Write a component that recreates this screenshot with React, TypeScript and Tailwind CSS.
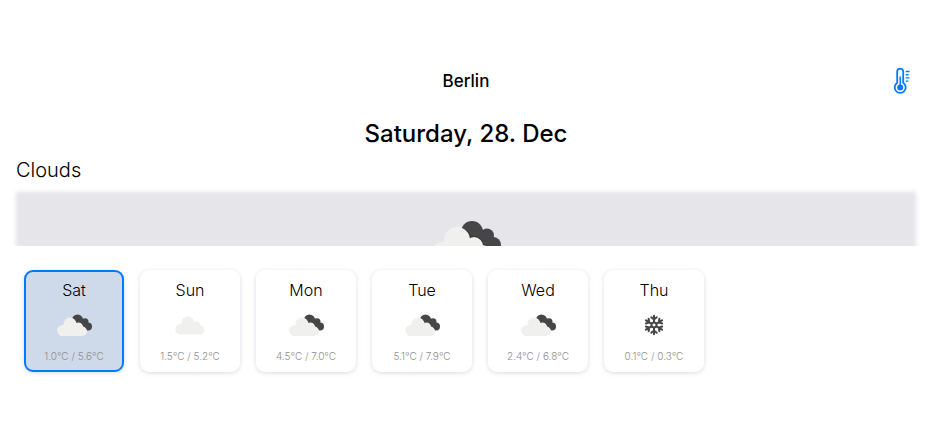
type Weather = "cloudy" | "cloud" | "snow";

const days: { name: string; weather: Weather; temps: string }[] = [
  { name: "Sat", weather: "cloudy", temps: "1.0°C / 5.6°C" },
  { name: "Sun", weather: "cloud", temps: "1.5°C / 5.2°C" },
  { name: "Mon", weather: "cloudy", temps: "4.5°C / 7.0°C" },
  { name: "Tue", weather: "cloudy", temps: "5.1°C / 7.9°C" },
  { name: "Wed", weather: "cloudy", temps: "2.4°C / 6.8°C" },
  { name: "Thu", weather: "snow", temps: "0.1°C / 0.3°C" },
];

function LightCloud() {
  return (
    <g fill="#f0f0ef">
      <circle cx="26" cy="20" r="13" />
      <circle cx="43" cy="26" r="9" />
      <circle cx="11.500" cy="33" r="11" />
      <circle cx="50.500" cy="34.500" r="9.500" />
      <path d="M11.500 22H50v22H11.500Z" />
    </g>
  );
}

function CloudyIcon({ className }: { className: string }) {
  return (
    <svg viewBox="0 0 70 46" className={className} aria-hidden="true">
      <g fill="#464648">
        <circle cx="41" cy="12" r="11" />
        <circle cx="56" cy="15.500" r="7" />
        <circle cx="62" cy="25" r="8" />
        <path d="M36 14 50 8 62 22 58 32 45 24Z" />
      </g>
      <path
        fill="none"
        stroke="#1c1c1e"
        strokeOpacity="0.6"
        strokeWidth="1.500"
        d="M34 9.500a13.500 13.500 0 0 1 5 8.200 9.500 9.500 0 0 1 13 8"
      />
      <LightCloud />
    </svg>
  );
}

function CloudIcon({ className }: { className: string }) {
  return (
    <svg viewBox="0 6 61 39" className={className} aria-hidden="true">
      <LightCloud />
    </svg>
  );
}

const armAngles = [0, 60, 120, 180, 240, 300];

function SnowIcon({ className }: { className: string }) {
  return (
    <svg
      viewBox="-11 -11 22 22"
      className={className}
      fill="none"
      stroke="#464648"
      strokeWidth="2"
      strokeLinecap="round"
      aria-hidden="true"
    >
      <path d="M0-2.800 2.420-1.400V1.400L0 2.800-2.420 1.400V-1.400Z" />
      {armAngles.map((angle) => (
        <path key={angle} transform={`rotate(${angle})`} d="M0-2.800V-9.300M-2.700-7.800 0-5.500 2.700-7.800" />
      ))}
    </svg>
  );
}

function ThermometerIcon() {
  return (
    <svg viewBox="0 0 18 28" className="h-7 w-[18px]" fill="none" stroke="#007aff" aria-hidden="true">
      <path
        strokeWidth="1.800"
        d="M4.200 15.800V4.600a3 3 0 0 1 6 0V15.800a5.500 5.500 0 1 1-6 0Z"
      />
      <path strokeWidth="1.500" strokeLinecap="round" d="M7.200 10v9" />
      <circle cx="7.200" cy="20.500" r="3" fill="#007aff" stroke="none" />
      <path strokeWidth="1.400" d="M12.700 4.500h3.800M12.700 7.700h2.800M12.700 10.900h3.800M12.700 14.100h2.800" />
    </svg>
  );
}

function WeatherIcon({ weather }: { weather: Weather }) {
  if (weather === "cloudy") return <CloudyIcon className="h-[23px] w-[35px]" />;
  if (weather === "cloud") return <CloudIcon className="h-[19px] w-[30px]" />;
  return <SnowIcon className="size-[22px]" />;
}

export default function App() {
  return (
    <main className="bg-white pt-[59px] font-['Inter',sans-serif] text-black">
      <header className="grid h-11 grid-cols-[1fr_auto_1fr] items-center px-[21px]">
        <h1 className="col-start-2 text-[17px] leading-6 font-medium">Berlin</h1>
        <button type="button" aria-label="Temperature unit" className="justify-self-end">
          <ThermometerIcon />
        </button>
      </header>

      <section className="h-[143px] overflow-hidden px-4 pt-4">
        <h2 className="text-center text-2xl leading-[30px] font-medium">Saturday, 28. Dec</h2>
        <p className="mt-2 text-xl leading-[26px] font-light">Clouds</p>
        <div className="mt-[9px] flex h-60 justify-center bg-[#e5e5ea] pt-7 shadow-[0_0_5px_#e5e5ea,inset_0_0_4px_#ffffff]">
          <CloudyIcon className="h-[46px] w-[70px]" />
        </div>
      </section>

      <section aria-label="Forecast" className="flex gap-4 overflow-x-auto px-6 py-6">
        {days.map((day, index) => (
          <button
            key={day.name}
            type="button"
            aria-pressed={index === 0}
            className={
              "flex h-[102px] w-[100px] shrink-0 flex-col items-center rounded-[9px] border-2 pt-1.5 shadow-[0_1px_5px_#dcdce4] " +
              (index === 0 ? "border-[#007aff] bg-[#ced9ea]" : "border-white bg-white")
            }
          >
            <span className="text-base leading-6 font-light">{day.name}</span>
            <span className="flex h-[46px] items-center justify-center">
              <WeatherIcon weather={day.weather} />
            </span>
            <span className="mt-0.5 text-[10px] leading-3 font-light text-[#8e8e8e]">{day.temps}</span>
          </button>
        ))}
      </section>
    </main>
  );
}
